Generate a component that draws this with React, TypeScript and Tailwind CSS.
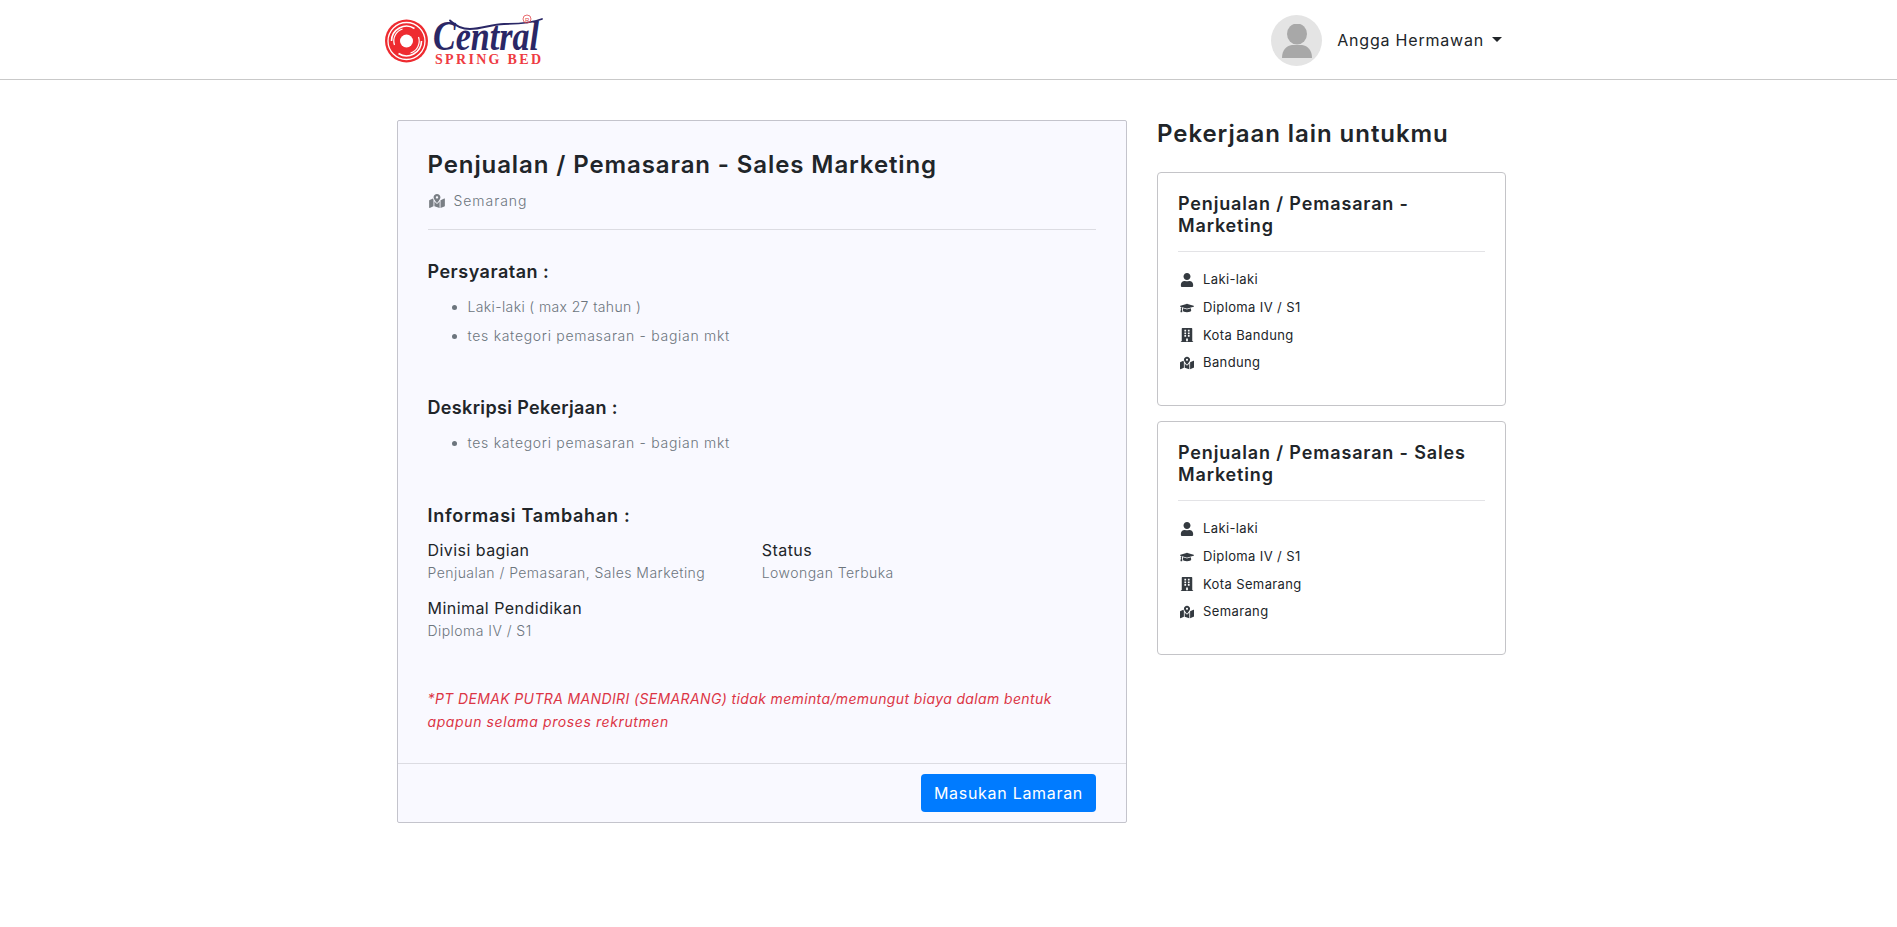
import { FaMapMarkedAlt, FaUser, FaGraduationCap, FaBuilding } from "react-icons/fa";

function Logo() {
  return (
    <svg width="166" height="56" viewBox="0 0 166 56" className="block shrink-0">
      <circle cx="22.5" cy="29" r="21.5" fill="#ee2b30" />
      <circle cx="22.5" cy="29" r="18.5" fill="none" stroke="#fff" strokeWidth="1.3" />
      <path d="M7.5 29a15 15 0 0 1 23-12.5M37.500 29a15 15 0 0 1-23 12.5" fill="none" stroke="#fff" strokeWidth="1.6" />
      <path d="M10.5 33a12.5 12.5 0 0 1 8-16M34.5 25a12.5 12.5 0 0 1-8 16" fill="none" stroke="#fff" strokeWidth="1.2" />
      <circle cx="22.5" cy="29" r="6.5" fill="#fff" />
      <text x="49" y="38" fontFamily="'Liberation Serif', serif" fontStyle="italic" fontWeight="700" fontSize="42" fill="#2a2766" textLength="106" lengthAdjust="spacingAndGlyphs">Central</text>
      <path d="M66 8.500c6 6 12 8.500 20 8.500 12 0 22-5 34-5 14 0 28-1 38-5" fill="none" stroke="#2a2766" strokeWidth="1.8" strokeLinecap="round" />
      <text x="51" y="52" fontFamily="'Liberation Serif', serif" fontWeight="700" fontSize="14" fill="#ee3b42" textLength="106" lengthAdjust="spacing">SPRING BED</text>
      <circle cx="143" cy="7" r="4" fill="none" stroke="#e2474c" strokeWidth="0.8" />
      <text x="141" y="9.5" fontFamily="'Liberation Sans', sans-serif" fontSize="6" fill="#e2474c">R</text>
    </svg>
  );
}

function Bullets({ items }: { items: { text: string; cls: string }[] }) {
  return (
    <ul className="list-disc pl-10 m-0 text-[14px] leading-[29px] font-light text-[#6c757d]">
      {items.map((t) => (
        <li key={t.text} className={t.cls}>
          {t.text}
        </li>
      ))}
    </ul>
  );
}

function Info({ label, value }: { label: string; value: string }) {
  return (
    <div className="h-[58px]">
      <div className="text-[16px] leading-[24px] text-[#212529] tracking-[0.45px]">{label}</div>
      <div className="text-[14px] leading-[21px] font-light text-[#6c757d] tracking-[0.45px]">{value}</div>
    </div>
  );
}

function Side({ title, city, region }: { title: string; city: string; region: string }) {
  const rows = [
    { I: FaUser, t: "Laki-laki" },
    { I: FaGraduationCap, t: "Diploma IV / S1" },
    { I: FaBuilding, t: city },
    { I: FaMapMarkedAlt, t: region },
  ];
  return (
    <div className="h-[234px] border border-[#c4c4c8] rounded-[4px] bg-white pt-5 px-5">
      <h3 className="m-0 text-[18px] leading-[21.6px] font-semibold text-[#212529] tracking-[0.85px]">{title}</h3>
      <div className="mt-[15px] border-t border-[#e3e3e6]" />
      <div className="mt-[14px] flex flex-col">
        {rows.map(({ I, t }) => (
          <div key={t} className="flex items-center h-[27.7px] text-[13px] text-[#212529] tracking-[0.38px]">
            <span className="w-[25px] shrink-0 text-[#343a40]">
              <span className="w-[17px] flex justify-center">
                <I className="h-[14px] w-auto shrink-0" />
              </span>
            </span>
            {t}
          </div>
        ))}
      </div>
    </div>
  );
}

const h2 = "mb-[7px] text-[18px] leading-[26px] font-semibold";

export default function App() {
  return (
    <div className="min-h-[927px] bg-white font-['Inter','Liberation_Sans',sans-serif] text-[#212529]">
      <header className="h-[80px] border-b border-[#c9c9c9] flex items-center justify-between pl-[384px] pr-[395px]">
        <Logo />
        <div className="flex items-center">
          <div className="mt-[2px] w-[51px] h-[51px] rounded-full bg-[#e4e4e4] flex items-center justify-center overflow-hidden">
            <svg width="30" height="34" viewBox="0 0 30 34" fill="#a8a8a8">
              <ellipse cx="15" cy="10" rx="10" ry="10.5" />
              <path d="M0 34c0-8 4-12 10-13h10c6 1 10 5 10 13z" />
            </svg>
          </div>
          <span className="ml-[15px] text-[16px] tracking-[0.8px] text-[#212529]">Angga Hermawan</span>
          <span className="ml-[8px] shrink-0 w-[10px] h-[5px] border-t-[5px] border-x-[5px] border-t-[#212529] border-x-transparent" />
        </div>
      </header>

      <main className="flex items-start gap-[30px] pt-[40px] pl-[397px]">
        <section className="w-[730px] h-[703px] border border-[#c4c4cc] rounded-[2px] bg-[#f9f9ff] flex flex-col">
          <div className="flex-1 pl-[29.5px] pr-[30px] pt-[27px]">
            <h1 className="m-0 text-[24px] leading-[34px] font-semibold text-[#212529] tracking-[0.9px]">
              Penjualan / Pemasaran - Sales Marketing
            </h1>
            <div className="mt-[8px] flex items-center text-[14px] leading-[22px] font-light text-[#6c757d] tracking-[0.95px]">
              <FaMapMarkedAlt className="ml-[1px] mr-[9px] w-[16px] h-[14px] text-[#7a7f85]" />
              Semarang
            </div>
            <div className="mt-[17px] border-t border-[#dcdce2]" />

            <h2 className={`mt-[29px] tracking-[0.5px] ${h2}`}>Persyaratan :</h2>
            <Bullets
              items={[
                { text: "Laki-laki ( max 27 tahun )", cls: "tracking-[0.37px]" },
                { text: "tes kategori pemasaran - bagian mkt", cls: "tracking-[0.7px]" },
              ]}
            />

            <h2 className={`mt-[45px] tracking-[0.35px] ${h2}`}>Deskripsi Pekerjaan :</h2>
            <Bullets items={[{ text: "tes kategori pemasaran - bagian mkt", cls: "tracking-[0.7px]" }]} />

            <h2 className="mt-[46px] tracking-[0.75px] mb-[9px] text-[18px] leading-[26px] font-semibold">Informasi Tambahan :</h2>
            <div className="grid grid-cols-2">
              <Info label="Divisi bagian" value="Penjualan / Pemasaran, Sales Marketing" />
              <Info label="Status" value="Lowongan Terbuka" />
              <Info label="Minimal Pendidikan" value="Diploma IV / S1" />
            </div>
            <p className="mt-[33px] m-0 text-[14px] leading-[23px] italic text-[#dc3545] tracking-[0.37px]">
              *PT DEMAK PUTRA MANDIRI (SEMARANG) tidak meminta/memungut biaya dalam bentuk
              <br />
              <span className="tracking-[0.6px]">apapun selama proses rekrutmen</span>
            </p>
          </div>
          <div className="h-[59px] border-t border-[#dcdce2] flex items-center justify-end pr-[30px]">
            <button className="h-[38px] w-[175px] rounded-[4px] bg-[#007bff] text-white text-[16px] tracking-[0.7px]">
              Masukan Lamaran
            </button>
          </div>
        </section>

        <aside className="w-[349px]">
          <h2 className="m-0 text-[24px] leading-[28px] font-semibold text-[#212529] tracking-[0.95px]">Pekerjaan lain untukmu</h2>
          <div className="mt-[24px] flex flex-col gap-[15px]">
            <Side title="Penjualan / Pemasaran - Marketing" city="Kota Bandung" region="Bandung" />
            <Side title="Penjualan / Pemasaran - Sales Marketing" city="Kota Semarang" region="Semarang" />
          </div>
        </aside>
      </main>
    </div>
  );
}
